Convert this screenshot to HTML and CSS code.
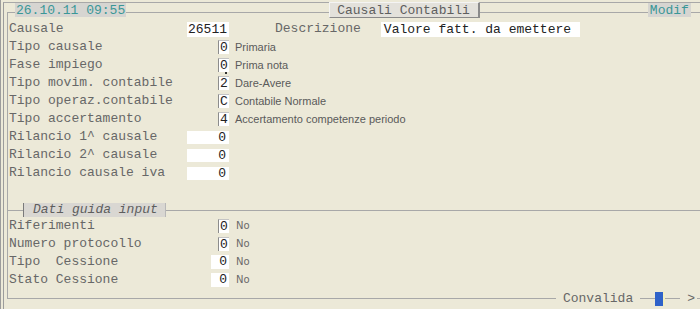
FILE: index.html
```html
<!DOCTYPE html>
<html>
<head>
	<link rel="stylesheet" href="styles.css">
	<title>Causali Contabili</title>
</head>
<body>
	<div class="window">
		<div class="frame">

			<div class="head">
				<span class="stamp">26.10.11 09:55</span>
				<span class="title">Causali Contabili</span>
				<span class="mode">Modif</span>
			</div>

			<div class="panel">
				<div class="row">
					<span class="lbl">Causale</span>
					<span class="fld"><span class="box wide">26511</span></span>
					<span class="lbl2">Descrizione</span>
					<span class="box text">Valore fatt. da emettere</span>
				</div>
				<div class="row">
					<span class="lbl">Tipo causale</span>
					<span class="fld"><span class="box">0</span></span>
					<span class="desc">Primaria</span>
				</div>
				<div class="row">
					<span class="lbl">Fase impiego</span>
					<span class="fld"><span class="box cursor">0</span></span>
					<span class="desc">Prima nota</span>
				</div>
				<div class="row">
					<span class="lbl">Tipo movim. contabile</span>
					<span class="fld"><span class="box">2</span></span>
					<span class="desc">Dare-Avere</span>
				</div>
				<div class="row">
					<span class="lbl">Tipo operaz.contabile</span>
					<span class="fld"><span class="box">C</span></span>
					<span class="desc">Contabile Normale</span>
				</div>
				<div class="row">
					<span class="lbl">Tipo accertamento</span>
					<span class="fld"><span class="box">4</span></span>
					<span class="desc">Accertamento competenze periodo</span>
				</div>
				<div class="row">
					<span class="lbl">Rilancio 1^ causale</span>
					<span class="fld"><span class="box num">0</span></span>
				</div>
				<div class="row">
					<span class="lbl">Rilancio 2^ causale</span>
					<span class="fld"><span class="box num">0</span></span>
				</div>
				<div class="row">
					<span class="lbl">Rilancio causale iva</span>
					<span class="fld"><span class="box num">0</span></span>
				</div>

				<div class="sub">
					<span class="sub-line lead"></span>
					<span class="sub-title">Dati guida input</span>
					<span class="sub-line"></span>
				</div>

				<div class="row">
					<span class="lbl">Riferimenti</span>
					<span class="fld"><span class="box">0</span></span>
					<span class="desc no">No</span>
				</div>
				<div class="row">
					<span class="lbl">Numero protocollo</span>
					<span class="fld"><span class="box">0</span></span>
					<span class="desc no">No</span>
				</div>
				<div class="row">
					<span class="lbl">Tipo  Cessione</span>
					<span class="fld"><span class="box mid">0</span></span>
					<span class="desc no">No</span>
				</div>
				<div class="row">
					<span class="lbl">Stato Cessione</span>
					<span class="fld"><span class="box mid">0</span></span>
					<span class="desc no">No</span>
				</div>
			</div>

			<div class="foot">
				<span class="fline grow"></span>
				<span class="ok">Convalida</span>
				<span class="fline s1"></span>
				<span class="mark"></span>
				<span class="fline s2"></span>
				<span class="arrow">&gt;</span>
				<span class="fline s3"></span>
			</div>

		</div>
	</div>
</body>
</html>
```

FILE: styles.css
```css
body
{
	margin: 0;
	background-color: #ece9d8;
	font-family: "Liberation Mono", monospace;
	font-size: 13px;
	color: #676767;
}
.window
{
	height: 309px;
	border-left: 1px solid #9c9c9c;
	padding-left: 2px;
	box-sizing: border-box;
	overflow: hidden;
}
.frame
{
	margin-top: 2px;
	height: 307px;
	border-left: 1px solid #9c9c9c;
	border-top: 1px solid #a8a8a8;
	padding-left: 3px;
	box-sizing: border-box;
}

/* header over the group line */
.head
{
	display: flex;
	align-items: flex-start;
	height: 15px;
	position: relative;
	z-index: 1;
}
.stamp, .mode
{
	height: 14px;
	line-height: 15px;
	background-color: #d6d5d1;
	color: #3a9797;
	padding: 0 1px;
}
.stamp
{
	margin-left: 8px;
}
.title
{
	margin-left: 203px;
	margin-top: -1px;
	height: 16px;
	line-height: 15px;
	padding: 0 8px 0 7px;
	background-color: #e3e1db;
	border-left: 1px solid #f4f4f4;
	border-top: 1px solid #f4f4f4;
	border-right: 2px solid #8a8a8a;
	border-bottom: 1px solid #8a8a8a;
	box-sizing: border-box;
	color: #5e5e5e;
}
.mode
{
	margin-left: 168px;
	padding: 0 2px;
}

.panel
{
	margin-top: -6px;
	height: 286px;
	border-left: 1px solid #a8a8a8;
	border-top: 1px solid #a8a8a8;
	padding-top: 7px;
	box-sizing: border-box;
}
.row
{
	display: flex;
	align-items: center;
	height: 18px;
	line-height: 18px;
	padding-left: 1px;
	white-space: pre;
}
.lbl
{
	width: 178px;
}
.fld
{
	width: 42px;
	display: flex;
	justify-content: flex-end;
}
.box
{
	width: 11px;
	height: 14px;
	line-height: 14px;
	background-color: #fff;
	border-left: 1px solid #8c8c8c;
	border-top: 1px solid #c4c4c4;
	box-sizing: border-box;
	color: #222;
	text-align: center;
	position: relative;
}
.box.mid
{
	width: 18px;
	text-align: right;
	padding-right: 2px;
	border: none;
}
.box.num
{
	width: 42px;
	height: 13px;
	line-height: 13px;
	text-align: right;
	padding-right: 3px;
	border: none;
}
.box.wide
{
	width: 42px;
	height: 15px;
	line-height: 15px;
	text-align: right;
	padding-right: 2px;
	border: none;
}
.box.text
{
	width: 199px;
	height: 15px;
	line-height: 15px;
	margin-left: 20px;
	text-align: left;
	padding-left: 3px;
	border: none;
}
.cursor::after
{
	content: "";
	position: absolute;
	left: 6px;
	bottom: -2px;
	width: 2px;
	height: 2px;
	background-color: #333;
}
.lbl2
{
	margin-left: 46px;
}
.desc
{
	margin-left: 6px;
	font-family: "Liberation Sans", sans-serif;
	font-size: 11px;
	color: #5a5a5a;
}
.desc.no
{
	margin-left: 7px;
	font-family: "DejaVu Sans", sans-serif;
	font-size: 10px;
	color: #6a6a6a;
}

/* sub group: Dati guida input */
.sub
{
	display: flex;
	align-items: center;
	height: 14px;
	margin-top: 21px;
}
.sub-line
{
	flex: 1;
	height: 1px;
	background-color: #a8a8a8;
}
.sub-line.lead
{
	flex: none;
	width: 15px;
}
.sub-title
{
	width: 143px;
	height: 14px;
	line-height: 14px;
	background-color: #d9d7d2;
	border-left: 1px solid #7a7a7a;
	border-right: 1px solid #b8b8b8;
	box-sizing: border-box;
	padding-left: 9px;
	font-style: italic;
	color: #5e5e5e;
}

/* bottom line with Convalida */
.foot
{
	display: flex;
	align-items: center;
	height: 15px;
	margin-top: -7px;
}
.fline
{
	height: 1px;
	background-color: #a8a8a8;
}
.fline.grow
{
	flex: 1;
}
.ok
{
	margin: 0 7px;
	line-height: 15px;
}
.fline.s1, .fline.s2
{
	width: 15px;
}
.fline.s3
{
	width: 3px;
}
.mark
{
	width: 10px;
	height: 14px;
	background-color: #2f62c9;
	border-right: 2px solid #f3efc0;
	box-sizing: border-box;
}
.arrow
{
	margin: 0 2px 0 7px;
	line-height: 15px;
}
```
